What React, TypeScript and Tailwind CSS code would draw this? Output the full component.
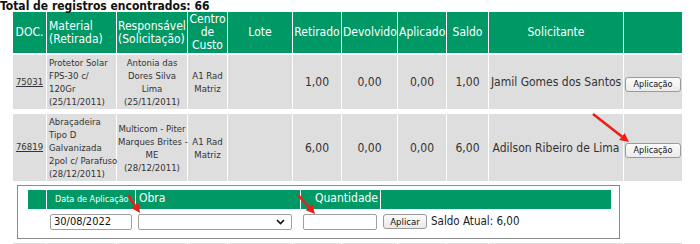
import React from "react";

const font = "font-['DejaVu_Sans_Condensed','DejaVu_Sans',sans-serif]";

function AppButton({ label }: { label: string }) {
  return (
    <button className="h-[15px] w-[56px] rounded-[3px] border border-[#9a9a9a] bg-gradient-to-b from-[#fbfbfb] to-[#ebebeb] text-[9px] leading-[13px] text-[#111]">
      {label}
    </button>
  );
}

const head = "bg-[#009966] text-white text-[12px] leading-[13px] font-normal p-[1px]";
const cell = "bg-[#dedede] p-[1px] text-[#333]";

type Row = {
  doc: string;
  material: string[];
  resp: string[];
  valor: string;
  saldo: string;
  solicitante: string;
  h: string;
};

const rows: Row[] = [
  {
    doc: "75031",
    material: ["Protetor Solar", "FPS-30 c/", "120Gr", "(25/11/2011)"],
    resp: ["Antonia das", "Dores Silva", "Lima", "(25/11/2011)"],
    valor: "1,00",
    saldo: "1,00",
    solicitante: "Jamil Gomes dos Santos",
    h: "h-[53px]",
  },
  {
    doc: "76819",
    material: ["Abraçadeira", "Tipo D", "Galvanizada", "2pol c/ Parafuso", "(28/12/2011)"],
    resp: ["Multicom - Piter", "Marques Brites -", "ME", "(28/12/2011)"],
    valor: "6,00",
    saldo: "6,00",
    solicitante: "Adilson Ribeiro de Lima",
    h: "h-[67px]",
  },
];

function DataRow({ r }: { r: Row }) {
  return (
    <tr className={r.h}>
      <td className={`${cell} text-center text-[9.5px]`}>
        <a className="underline text-[#333]">{r.doc}</a>
      </td>
      <td className={`${cell} pl-[2px] text-[9.5px] leading-[13px]`}>
        {r.material.map((l) => (
          <div key={l} className="whitespace-nowrap">{l}</div>
        ))}
      </td>
      <td className={`${cell} text-center text-[9.5px] leading-[13px]`}>
        {r.resp.map((l) => (
          <div key={l} className="whitespace-nowrap">{l}</div>
        ))}
      </td>
      <td className={`${cell} text-center text-[9.5px] leading-[13px]`}>
        <div>A1 Rad</div>
        <div>Matriz</div>
      </td>
      <td className={cell}></td>
      <td className={`${cell} text-center text-[12px]`}>{r.valor}</td>
      <td className={`${cell} text-center text-[12px]`}>0,00</td>
      <td className={`${cell} text-center text-[12px]`}>0,00</td>
      <td className={`${cell} text-center text-[12px]`}>{r.saldo}</td>
      <td className={`${cell} text-center text-[12px] whitespace-nowrap`}>{r.solicitante}</td>
      <td className={`${cell} text-center`}>
        <AppButton label="Aplicação" />
      </td>
    </tr>
  );
}

function ApplyBox() {
  return (
    <div className="h-[54px] w-[603px] border border-[#8a8a8a] pl-[9px] pt-[4px]">
      <table className="border-separate [border-spacing:1px_0px] table-fixed w-[585px]">
        <colgroup>
          <col className="w-[18px]" />
          <col className="w-[88px]" />
          <col className="w-[164px]" />
          <col className="w-[79px]" />
          <col className="w-[230px]" />
        </colgroup>
        <tbody>
          <tr className="h-[19px] bg-[#009966] text-white font-normal">
            <th className="p-0"></th>
            <th className="p-0 pl-[8px] text-left align-baseline text-[9px] font-normal whitespace-nowrap">
              Data de Aplicação
            </th>
            <th className="p-0 pl-[3px] text-left align-baseline text-[12px] leading-[17px] font-normal">Obra</th>
            <th className="p-0 pr-[2px] text-right align-baseline text-[12px] leading-[17px] font-normal">Quantidade</th>
            <th className="p-0"></th>
          </tr>
          <tr className="h-[4px]">
            <td colSpan={5} className="p-0"></td>
          </tr>
          <tr>
            <td className="p-0"></td>
            <td className="p-0 pl-[3px]">
              <div className="h-[16px] w-[82px] rounded-[2px] border border-[#a0a0a0] bg-white pl-[3px] text-[11px] leading-[14px] text-[#111]">
                30/08/2022
              </div>
            </td>
            <td className="p-0 pl-[2px]">
              <div className="flex h-[16px] w-[154px] items-center justify-end rounded-[2px] border border-[#a0a0a0] bg-white pr-[6px]">
                <svg width="9" height="6" viewBox="0 0 9 6">
                  <path d="M1 1 L4.5 4.5 L8 1" fill="none" stroke="#111" strokeWidth="1.6" />
                </svg>
              </div>
            </td>
            <td className="p-0 pl-[2px]">
              <div className="h-[16px] w-[74px] rounded-[2px] border border-[#a0a0a0] bg-white"></div>
            </td>
            <td className="p-0 pl-[2px]">
              <div className="flex items-center gap-[4px]">
                <button className="h-[15px] w-[44px] rounded-[3px] border border-[#9a9a9a] bg-gradient-to-b from-[#fbfbfb] to-[#e9e9e9] text-[9.5px] leading-[13px] text-[#111]">
                  Aplicar
                </button>
                <span className="text-[11.5px] text-[#222] whitespace-nowrap">Saldo Atual: 6,00</span>
              </div>
            </td>
          </tr>
        </tbody>
      </table>
    </div>
  );
}

function Arrows() {
  const arrows = [
    [593, 114, 629, 142],
    [128, 195, 140, 213],
    [298, 195, 315, 214],
  ];
  return (
    <svg className="pointer-events-none absolute left-0 top-0" width="700" height="244">
      {arrows.map(([x1, y1, x2, y2], i) => {
        const a = Math.atan2(y2 - y1, x2 - x1);
        const L = 9;
        const W = 4.5;
        const bx = x2 - L * Math.cos(a);
        const by = y2 - L * Math.sin(a);
        const p1 = `${bx - W * Math.sin(a)},${by + W * Math.cos(a)}`;
        const p2 = `${bx + W * Math.sin(a)},${by - W * Math.cos(a)}`;
        return (
          <g key={i}>
            <line x1={x1} y1={y1} x2={bx} y2={by} stroke="#e8201a" strokeWidth="2.6" />
            <polygon points={`${x2},${y2} ${p1} ${p2}`} fill="#e8201a" />
          </g>
        );
      })}
    </svg>
  );
}

export default function App() {
  return (
    <div className={`relative h-[244px] w-[700px] overflow-hidden bg-white ${font}`}>
      <div className="h-[10px] text-[12px] font-bold leading-[12px] text-[#111]">
        Total de registros encontrados: 66
      </div>
      <table className="ml-[12px] w-[671px] table-fixed border-separate [border-spacing:1px_2px]">
        <colgroup>
          <col className="w-[33px]" />
          <col className="w-[69px]" />
          <col className="w-[70px]" />
          <col className="w-[39px]" />
          <col className="w-[64px]" />
          <col className="w-[48px]" />
          <col className="w-[55px]" />
          <col className="w-[48px]" />
          <col className="w-[41px]" />
          <col className="w-[134px]" />
          <col className="w-[58px]" />
        </colgroup>
        <tbody>
          <tr className="h-[41px]">
            <th className={`${head} text-center`}>DOC.</th>
            <th className={`${head} text-left pl-[2px]`}>
              Material
              <br />
              (Retirada)
            </th>
            <th className={`${head} text-left whitespace-nowrap`}>
              Responsável
              <br />
              (Solicitação)
            </th>
            <th className={`${head} text-center`}>
              Centro
              <br />
              de
              <br />
              Custo
            </th>
            <th className={`${head} text-center`}>Lote</th>
            <th className={`${head} text-center`}>Retirado</th>
            <th className={`${head} text-center`}>Devolvido</th>
            <th className={`${head} text-center`}>Aplicado</th>
            <th className={`${head} text-center`}>Saldo</th>
            <th className={`${head} text-center`}>Solicitante</th>
            <th className={head}></th>
          </tr>
          <DataRow r={rows[0]} />
          <tr className="h-[1px]">
            <td colSpan={11} className="p-0"></td>
          </tr>
          <DataRow r={rows[1]} />
          <tr className="h-[58px]">
            <td colSpan={11} className="p-0 pl-[4px] pt-[2px] align-top">
              <ApplyBox />
            </td>
          </tr>
          <tr className="h-[20px]">
            {Array.from({ length: 11 }).map((_, i) => (
              <td key={i} className={cell}></td>
            ))}
          </tr>
        </tbody>
      </table>
      <Arrows />
    </div>
  );
}
